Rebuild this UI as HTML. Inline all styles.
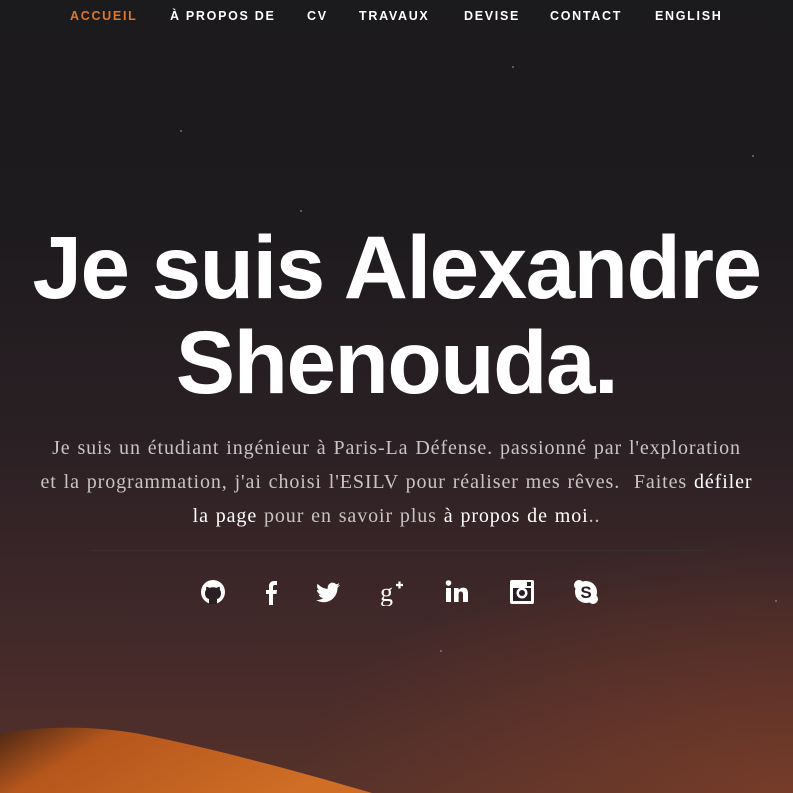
<!DOCTYPE html>
<html><head><meta charset="utf-8"><style>
*{margin:0;padding:0;box-sizing:border-box}
body{width:793px;height:793px;overflow:hidden;position:relative;
background:linear-gradient(180deg,#1b1a1c 0%,#1e1b1e 30%,#2a2024 55%,#3a2628 72%,#4a2c2a 88%,#56322a 100%);
font-family:"Liberation Sans",sans-serif}
.glow{position:absolute;left:0;top:0;width:793px;height:793px;background:radial-gradient(ellipse 500px 260px at 793px 793px,rgba(150,70,40,.5),rgba(0,0,0,0))}
.nav a{position:absolute;top:9px;font-size:12.5px;font-weight:bold;letter-spacing:1.7px;color:#fff;text-decoration:none}
h1{position:absolute;left:0;width:793px;top:220px;text-align:center;color:#fff;font-size:89px;line-height:95px;font-weight:bold;letter-spacing:-1.5px;white-space:nowrap}
p{position:absolute;left:0;width:793px;top:431px;text-align:center;font-family:"Liberation Serif",serif;font-size:20px;line-height:34px;color:#c9c4c4;letter-spacing:0.9px;word-spacing:1px;white-space:nowrap}
p b{font-weight:normal;color:#fff}
hr{position:absolute;left:90px;width:615px;top:550px;border:0;border-top:1px solid #3a3034}
.ic{position:absolute;top:578px;width:28px;height:28px}
.star{position:absolute;width:2px;height:2px;background:#aab;border-radius:1px;opacity:.6}
</style></head><body>
<div class="glow"></div>
<div class="star" style="left:512px;top:66px"></div>
<div class="star" style="left:180px;top:130px"></div>
<div class="star" style="left:752px;top:155px"></div>
<div class="star" style="left:300px;top:210px"></div>
<div class="star" style="left:775px;top:600px"></div>
<div class="star" style="left:440px;top:650px"></div>
<div class="nav">
<a style="left:70px;color:#e1762a">ACCUEIL</a>
<a style="left:170px">À PROPOS DE</a>
<a style="left:307px">CV</a>
<a style="left:359px">TRAVAUX</a>
<a style="left:464px">DEVISE</a>
<a style="left:550px">CONTACT</a>
<a style="left:655px">ENGLISH</a>
</div>
<h1>Je suis Alexandre<br>Shenouda.</h1>
<p>Je suis un étudiant ingénieur à Paris-La Défense. passionné par l'exploration<br>et la programmation, j'ai choisi l'ESILV pour réaliser mes rêves.&nbsp; Faites <b>défiler</b><br><b>la page</b> pour en savoir plus <b>à propos de moi</b>..</p>
<hr>
<svg class="ic" style="left:199px" viewBox="0 0 28 28"><circle cx="14" cy="14" r="12" fill="#fff"/><path d="M10 26v-5c-2-.5-4-2-4-6 0-1.5.5-2.5 1.2-3.3-.2-.6-.3-1.8.2-3 1.2 0 2.3.7 3 1.2a11 11 0 0 1 7.2 0c.7-.5 1.8-1.2 3-1.2.5 1.2.4 2.4.2 3 .7.8 1.2 1.8 1.2 3.3 0 4-2 5.5-4 6v5z" fill="#2a2024"/></svg>
<svg class="ic" style="left:257px" viewBox="0 0 28 28"><path d="M12 27V16H9v-4h3V8.5C12 5 14 3 17 3h3v4h-2c-1.5 0-2 .6-2 2v3h4l-.5 4H16v11z" fill="#fff"/></svg>
<svg class="ic" style="left:314px" viewBox="0 0 28 28"><path d="M26 7c-.9.4-1.8.6-2.8.8 1-.6 1.8-1.6 2.1-2.7-1 .6-2 1-3.1 1.2a4.9 4.9 0 0 0-8.4 4.5C9.7 10.6 6.1 8.7 3.7 5.7c-1.3 2.3-.5 5 1.5 6.5-.8 0-1.6-.3-2.2-.6 0 2.4 1.7 4.4 3.9 4.8-.7.2-1.5.2-2.2.1.6 2 2.4 3.4 4.6 3.4A9.9 9.9 0 0 1 2 22c2.2 1.4 4.8 2.2 7.5 2.2 9.1 0 14.2-7.7 14-14.6.9-.7 1.8-1.5 2.5-2.6z" fill="#fff"/></svg>
<svg class="ic" style="left:380px" viewBox="0 0 28 28"><text x="0" y="23" font-family="Liberation Serif,serif" font-size="26" fill="#fff">g</text><path d="M16 7h7M19.5 3.5v7" stroke="#fff" stroke-width="2.2"/></svg>
<svg class="ic" style="left:444px" viewBox="0 0 28 28"><rect x="2" y="10" width="5" height="14" fill="#fff"/><circle cx="4.5" cy="5" r="2.8" fill="#fff"/><path d="M10 10h4.6v2c1-1.5 2.6-2.4 4.6-2.4 3.5 0 4.8 2.2 4.8 6V24h-5v-7.5c0-2-.6-3-2.2-3-1.7 0-2.2 1.2-2.2 3V24H10z" fill="#fff"/></svg>
<svg class="ic" style="left:508px" viewBox="0 0 28 28"><rect x="2" y="2" width="24" height="24" rx="2" fill="#fff"/><rect x="5" y="10" width="18" height="13" fill="#2a2024"/><circle cx="14" cy="15" r="5.5" fill="#fff"/><circle cx="14" cy="15" r="3" fill="#2a2024"/><rect x="19" y="4" width="4" height="4" fill="#2a2024"/></svg>
<svg class="ic" style="left:572px" viewBox="0 0 28 28"><circle cx="14" cy="14" r="11" fill="#fff"/><circle cx="7" cy="7" r="5" fill="#fff"/><circle cx="21" cy="21" r="5" fill="#fff"/><text x="14" y="20" text-anchor="middle" font-family="Liberation Sans,sans-serif" font-weight="bold" font-size="17" fill="#2a2024">S</text></svg>
<svg style="position:absolute;left:0;top:720px" width="793" height="73" viewBox="0 0 793 73">
<defs><linearGradient id="d" x1="0" y1="0" x2="1" y2="0.3"><stop offset="0" stop-color="#4a2614"/><stop offset=".3" stop-color="#b5561c"/><stop offset="1" stop-color="#d06e26"/></linearGradient></defs>
<path d="M0 14C40 6 90 5 140 14C220 30 300 52 372 73H0z" fill="url(#d)"/>
</svg>
</body></html>
